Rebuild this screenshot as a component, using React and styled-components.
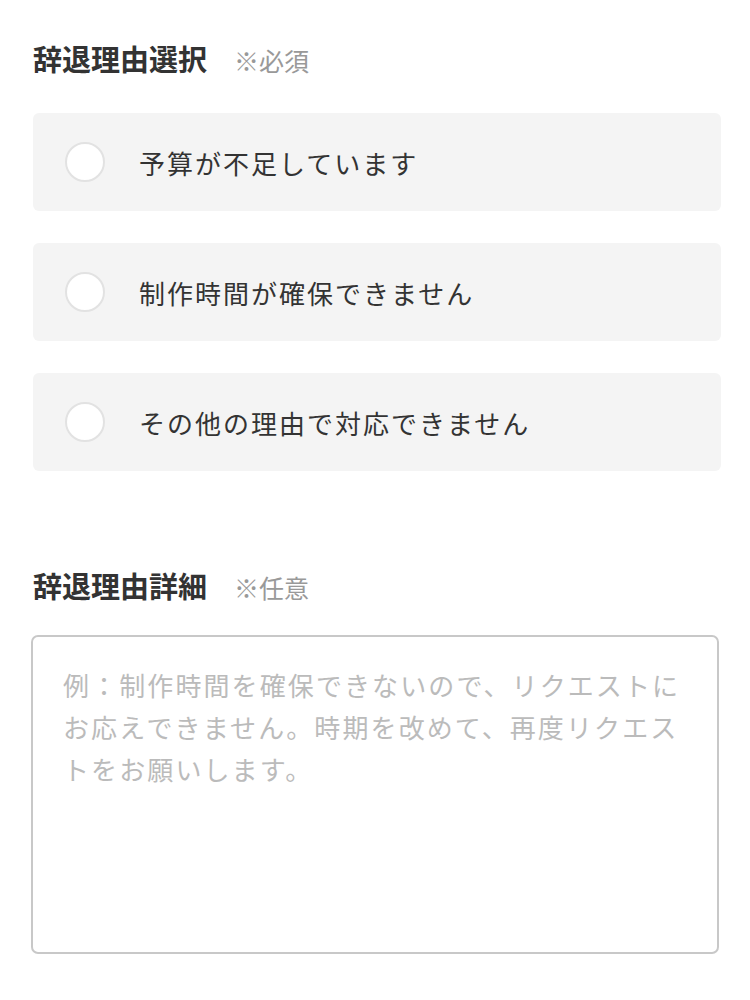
import React, { useState } from 'react';
import styled, { createGlobalStyle } from 'styled-components';

const GlobalStyle = createGlobalStyle`
  body {
    margin: 0;
    background: #fff;
    font-family: "Noto Sans CJK JP", "Noto Sans", sans-serif;
    color: #333;
  }
`;

const Page = styled.div`
  width: 688px;
  padding: 36px 0 0 31px;
`;

const Section = styled.section`
  margin-bottom: ${(p) => p.$gap || 0}px;
`;

const Heading = styled.div`
  display: flex;
  align-items: baseline;
  gap: 27px;
  height: 44px;
  padding-left: 2px;
  margin-bottom: ${(p) => p.$space}px;
`;

const Title = styled.h2`
  margin: 0;
  font-size: 29px;
  font-weight: 700;
  color: #333;
  line-height: 44px;
`;

const Note = styled.span`
  font-size: 25px;
  color: #999;
`;

const OptionList = styled.div`
  display: flex;
  flex-direction: column;
  gap: 32px;
  margin: 0 -2px 0 2px;
`;

const Option = styled.label`
  display: flex;
  align-items: center;
  height: 98px;
  padding-left: 32px;
  background: #f4f4f4;
  border-radius: 6px;
  cursor: pointer;
`;

const Radio = styled.span`
  width: 36px;
  height: 36px;
  border-radius: 50%;
  background: #fff;
  border: 2px solid ${(p) => (p.$checked ? '#333' : '#e2e2e2')};
  margin-right: 34px;
  flex-shrink: 0;
`;

const OptionText = styled.span`
  font-size: 26px;
  letter-spacing: 2px;
  color: #333;
`;

const TextArea = styled.textarea`
  display: block;
  box-sizing: border-box;
  width: 688px;
  height: 319px;
  border: 2px solid #c8c8c8;
  border-radius: 7px;
  padding: 27px 30px;
  font-family: "Noto Sans CJK JP", "Noto Sans", sans-serif;
  font-size: 26px;
  letter-spacing: 2.1px;
  line-height: 42px;
  color: #333;
  resize: none;
  outline: none;
  &::placeholder {
    color: #bbb;
  }
`;

const reasons = [
  '予算が不足しています',
  '制作時間が確保できません',
  'その他の理由で対応できません',
];

export default function App() {
  const [selected, setSelected] = useState(null);

  return (
    <Page>
      <GlobalStyle />
      <Section $gap={92}>
        <Heading $space={33}>
          <Title>辞退理由選択</Title>
          <Note>※必須</Note>
        </Heading>
        <OptionList>
          {reasons.map((r, i) => (
            <Option key={r} onClick={() => setSelected(i)}>
              <Radio $checked={selected === i} />
              <OptionText>{r}</OptionText>
            </Option>
          ))}
        </OptionList>
      </Section>
      <Section>
        <Heading $space={28}>
          <Title>辞退理由詳細</Title>
          <Note>※任意</Note>
        </Heading>
        <TextArea placeholder="例：制作時間を確保できないので、リクエストにお応えできません。時期を改めて、再度リクエストをお願いします。" />
      </Section>
    </Page>
  );
}
